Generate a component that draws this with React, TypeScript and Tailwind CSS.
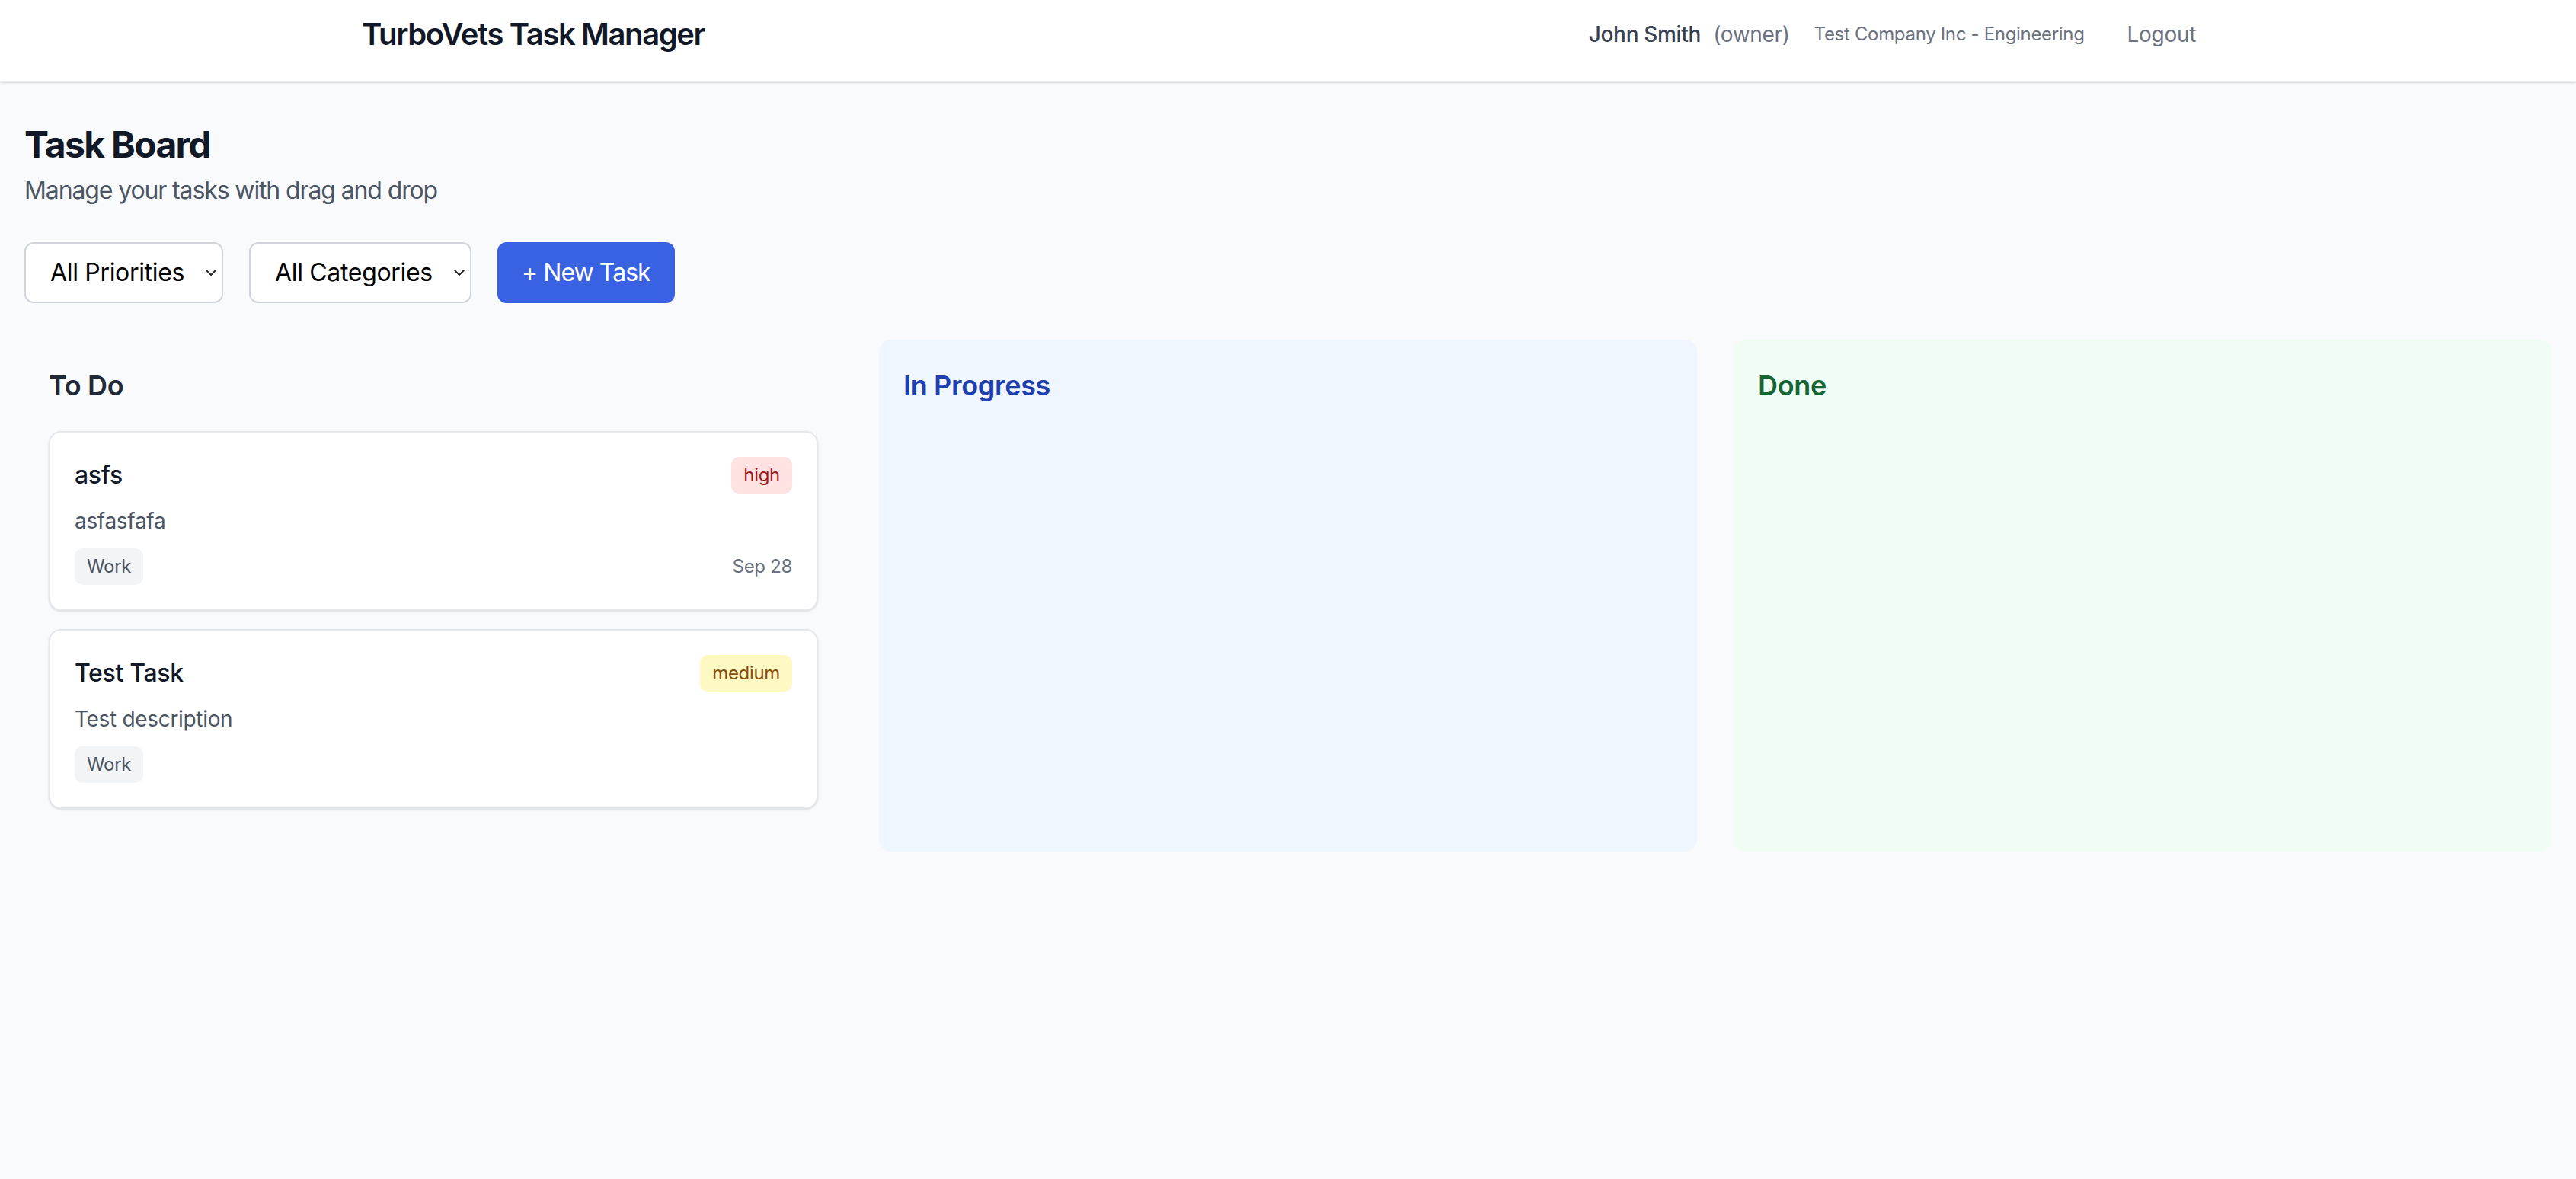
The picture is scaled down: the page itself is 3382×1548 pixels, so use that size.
import { useState } from "react";

type Priority = "high" | "medium" | "low";

type Task = {
  id: number;
  title: string;
  description: string;
  priority: Priority;
  category: string;
  due?: string;
  status: "todo" | "progress" | "done";
};

const tasks: Task[] = [
  {
    id: 1,
    title: "asfs",
    description: "asfasfafa",
    priority: "high",
    category: "Work",
    due: "Sep 28",
    status: "todo",
  },
  {
    id: 2,
    title: "Test Task",
    description: "Test description",
    priority: "medium",
    category: "Work",
    status: "todo",
  },
];

const priorityStyles: Record<Priority, string> = {
  high: "bg-[#fee2e2] text-[#991b1b]",
  medium: "bg-[#fef9c3] text-[#854d0e]",
  low: "bg-[#dcfce7] text-[#166534]",
};

const columns = [
  { key: "todo", title: "To Do", box: "bg-[#f9fafb]", head: "text-[#1f2937]" },
  { key: "progress", title: "In Progress", box: "bg-[#eff6ff]", head: "text-[#1e40af]" },
  { key: "done", title: "Done", box: "bg-[#f0fdf4]", head: "text-[#166534]" },
] as const;

function Chevron() {
  return (
    <svg
      width="16"
      height="10"
      viewBox="0 0 16 10"
      fill="none"
      className="pointer-events-none absolute right-[8px] top-1/2 -translate-y-1/2"
    >
      <path d="M2 2l6 6 6-6" stroke="#222" strokeWidth="1.8" strokeLinecap="round" strokeLinejoin="round" />
    </svg>
  );
}

function TaskCard({ task }: { task: Task }) {
  return (
    <div className="bg-white border-2 border-[#e5e7eb] rounded-[16px] p-[32px] shadow-sm">
      <div className="flex items-start justify-between mb-[16px]">
        <h3 className="text-[32px] leading-[48px] font-medium text-[#111827]">{task.title}</h3>
        <span
          className={`px-[16px] py-[8px] rounded-[10px] text-[24px] leading-[32px] ${priorityStyles[task.priority]}`}
        >
          {task.priority}
        </span>
      </div>
      <p className="text-[28px] leading-[40px] text-[#4b5563] mb-[16px]">{task.description}</p>
      <div className="flex items-center justify-between">
        <span className="px-[16px] py-[8px] rounded-[10px] bg-[#f3f4f6] text-[24px] leading-[32px] text-[#4b5563]">
          {task.category}
        </span>
        {task.due && <span className="text-[24px] leading-[32px] text-[#6b7280]">{task.due}</span>}
      </div>
    </div>
  );
}

export default function App() {
  const [priority, setPriority] = useState("all");
  const [category, setCategory] = useState("all");

  return (
    <div className="min-h-[1548px] bg-[#f9fafb] font-['Inter',sans-serif] tracking-[-0.02em]">
      {/* Header */}
      <header className="h-[108px] bg-white border-b-2 border-[#e5e7eb] shadow-sm">
        <div className="max-w-[2560px] mx-auto px-[64px] h-[90px] flex items-center justify-between">
          <h1 className="text-[40px] leading-[56px] font-semibold text-[#111827] tracking-[-0.035em]">
            TurboVets Task Manager
          </h1>
          <div className="flex items-center gap-[32px]">
            <div className="text-[28px] leading-[40px]">
              <span className="font-medium text-[#374151]">John Smith</span>
              <span className="ml-[16px] text-[#6b7280]">(owner)</span>
            </div>
            <span className="text-[24px] leading-[32px] text-[#6b7280]">Test Company Inc - Engineering</span>
            <button className="px-[24px] py-[16px] text-[28px] leading-[40px] text-[#6b7280]">Logout</button>
          </div>
        </div>
      </header>

      <main className="px-[32px] pt-[50px] pb-[32px]">
        <h2 className="text-[48px] leading-[64px] font-bold text-[#111827] tracking-[-0.035em]">Task Board</h2>
        <p className="text-[32px] leading-[48px] text-[#4b5563] mt-[4px] mb-[44px] tracking-[-0.035em]">
          Manage your tasks with drag and drop
        </p>

        {/* Filters */}
        <div className="flex items-center gap-[34px] mb-[48px]">
          <div className="relative">
            <select
              value={priority}
              onChange={(e) => setPriority(e.target.value)}
              className="appearance-none w-[261px] h-[80px] pl-[32px] pr-[40px] bg-white border-2 border-[#d1d5db] rounded-[12px] text-[32px] text-black"
            >
              <option value="all">All Priorities</option>
              <option value="high">High</option>
              <option value="medium">Medium</option>
              <option value="low">Low</option>
            </select>
            <Chevron />
          </div>
          <div className="relative">
            <select
              value={category}
              onChange={(e) => setCategory(e.target.value)}
              className="appearance-none w-[292px] h-[80px] pl-[32px] pr-[40px] bg-white border-2 border-[#d1d5db] rounded-[12px] text-[32px] text-black"
            >
              <option value="all">All Categories</option>
              <option value="work">Work</option>
              <option value="personal">Personal</option>
            </select>
            <Chevron />
          </div>
          <button className="h-[80px] px-[32px] rounded-[12px] bg-[#3962e3] text-white text-[32px] tracking-[-0.03em]">
            + New Task
          </button>
        </div>

        {/* Board */}
        <div className="grid grid-cols-3 gap-[48px]">
          {columns.map((col) => (
            <div key={col.key} className={`rounded-[16px] p-[32px] min-h-[672px] ${col.box}`}>
              <h3 className={`text-[36px] leading-[56px] font-semibold mb-[32px] ${col.head}`}>{col.title}</h3>
              <div className="space-y-[24px]">
                {tasks
                  .filter((t) => t.status === col.key)
                  .map((t) => (
                    <TaskCard key={t.id} task={t} />
                  ))}
              </div>
            </div>
          ))}
        </div>
      </main>
    </div>
  );
}
